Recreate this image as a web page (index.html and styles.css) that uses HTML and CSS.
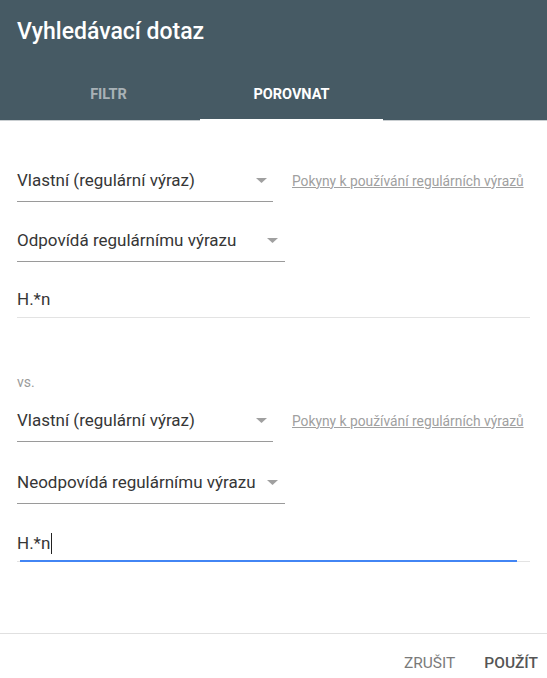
FILE: index.html
```html
<!DOCTYPE html>
<html lang="cs">
<head>
<meta charset="utf-8">
<title>Vyhledávací dotaz</title>
<link rel="stylesheet" href="styles.css">
</head>
<body>
<div class="dialog">
  <header class="header">
    <h1 class="title">Vyhledávací dotaz</h1>
    <nav class="tabs">
      <div class="tab">Filtr</div>
      <div class="tab active">Porovnat</div>
    </nav>
  </header>
  <main class="content">
    <div class="row first">
      <div class="select narrow">
        <span>Vlastní (regulární výraz)</span>
        <svg class="arrow" width="11" height="5" viewBox="0 0 11 5"><path d="M0 0h11L5.5 5z" fill="#a0a0a0"/></svg>
      </div>
      <a class="help">Pokyny k používání regulárních výrazů</a>
    </div>
    <div class="select wide second">
      <span>Odpovídá regulárnímu výrazu</span>
      <svg class="arrow" width="11" height="5" viewBox="0 0 11 5"><path d="M0 0h11L5.5 5z" fill="#a0a0a0"/></svg>
    </div>
    <div class="input third">H.*n</div>

    <div class="vs">vs.</div>

    <div class="row fourth">
      <div class="select narrow">
        <span>Vlastní (regulární výraz)</span>
        <svg class="arrow" width="11" height="5" viewBox="0 0 11 5"><path d="M0 0h11L5.5 5z" fill="#a0a0a0"/></svg>
      </div>
      <a class="help">Pokyny k používání regulárních výrazů</a>
    </div>
    <div class="select wide fifth">
      <span>Neodpovídá regulárnímu výrazu</span>
      <svg class="arrow" width="11" height="5" viewBox="0 0 11 5"><path d="M0 0h11L5.5 5z" fill="#a0a0a0"/></svg>
    </div>
    <div class="input focused sixth">H.*n<span class="caret"></span></div>
  </main>
  <footer class="footer">
    <button class="btn">Zrušit</button>
    <button class="btn primary">Použít</button>
  </footer>
</div>
</body>
</html>
```

FILE: styles.css
```css
* { box-sizing: border-box; }

html, body {
  margin: 0;
  padding: 0;
  background: #ffffff;
}

body {
  font-family: Roboto, "Noto Sans", "Liberation Sans", sans-serif;
  color: #333333;
}

.dialog {
  display: flex;
  flex-direction: column;
  height: 678px;
  width: 547px;
}

.header {
  background: #465a64;
  height: 121px;
  border-bottom: 1px solid #c9ced1;
  display: flex;
  flex-direction: column;
  justify-content: space-between;
}

.title {
  margin: 0;
  padding: 18px 0 0 17px;
  font-size: 23px;
  line-height: 28px;
  font-weight: 500;
  color: #ffffff;
}

.tabs {
  display: flex;
  margin-left: 17px;
  height: 50px;
  padding-bottom: 2px;
}

.tab {
  position: relative;
  width: 183px;
  display: flex;
  align-items: center;
  justify-content: center;
  font-size: 14.5px;
  font-weight: 700;
  text-transform: uppercase;
  color: rgba(255, 255, 255, 0.55);
}

.tab.active {
  color: #ffffff;
}

.tab.active::after {
  content: "";
  position: absolute;
  left: 0;
  right: 0;
  bottom: -3px;
  height: 2px;
  background: #ffffff;
}

.content {
  flex: 1;
  display: flex;
  flex-direction: column;
  align-items: flex-start;
  padding: 0 17px;
}

.row {
  display: flex;
  align-items: center;
}

.select {
  display: flex;
  align-items: center;
  justify-content: space-between;
  height: 43px;
  border-bottom: 1px solid #9a9a9a;
  font-size: 17px;
  color: #363636;
  padding-right: 6px;
}

.select.narrow { width: 256px; }
.select.wide { width: 268px; padding-right: 7px; }

.arrow { flex: none; }

.help {
  margin-left: 19px;
  font-size: 13.8px;
  color: #a0a0a0;
  text-decoration: underline;
}

.input {
  position: relative;
  width: 513px;
  height: 37px;
  display: flex;
  align-items: center;
  font-size: 17px;
  color: #363636;
  border-bottom: 1px solid #e3e3e3;
}

.input.focused::after {
  content: "";
  position: absolute;
  left: 3px;
  right: 13px;
  bottom: -1px;
  height: 2px;
  background: #4285f4;
}

.caret {
  display: inline-block;
  width: 1px;
  height: 21px;
  background: #222222;
  margin-left: 1px;
}

.first { margin-top: 38px; }
.second { margin-top: 17px; }
.third { margin-top: 19px; }

.vs {
  margin-top: 56px;
  font-size: 14px;
  line-height: 17px;
  color: #9a9a9a;
}

.fourth { margin-top: 8px; }
.fifth { margin-top: 19px; }
.sixth { margin-top: 21px; }

.footer {
  height: 45px;
  border-top: 1px solid #e0e0e0;
  display: flex;
  justify-content: flex-end;
  align-items: flex-start;
  padding: 19px 9px 0 0;
  gap: 29px;
}

.btn {
  border: none;
  background: none;
  padding: 0;
  font-family: Roboto, "Noto Sans", "Liberation Sans", sans-serif;
  font-size: 15.5px;
  line-height: 20px;
  text-transform: uppercase;
  color: #7a7a7a;
  font-weight: 400;
}

.btn.primary {
  color: #555555;
  font-weight: 500;
}
```
